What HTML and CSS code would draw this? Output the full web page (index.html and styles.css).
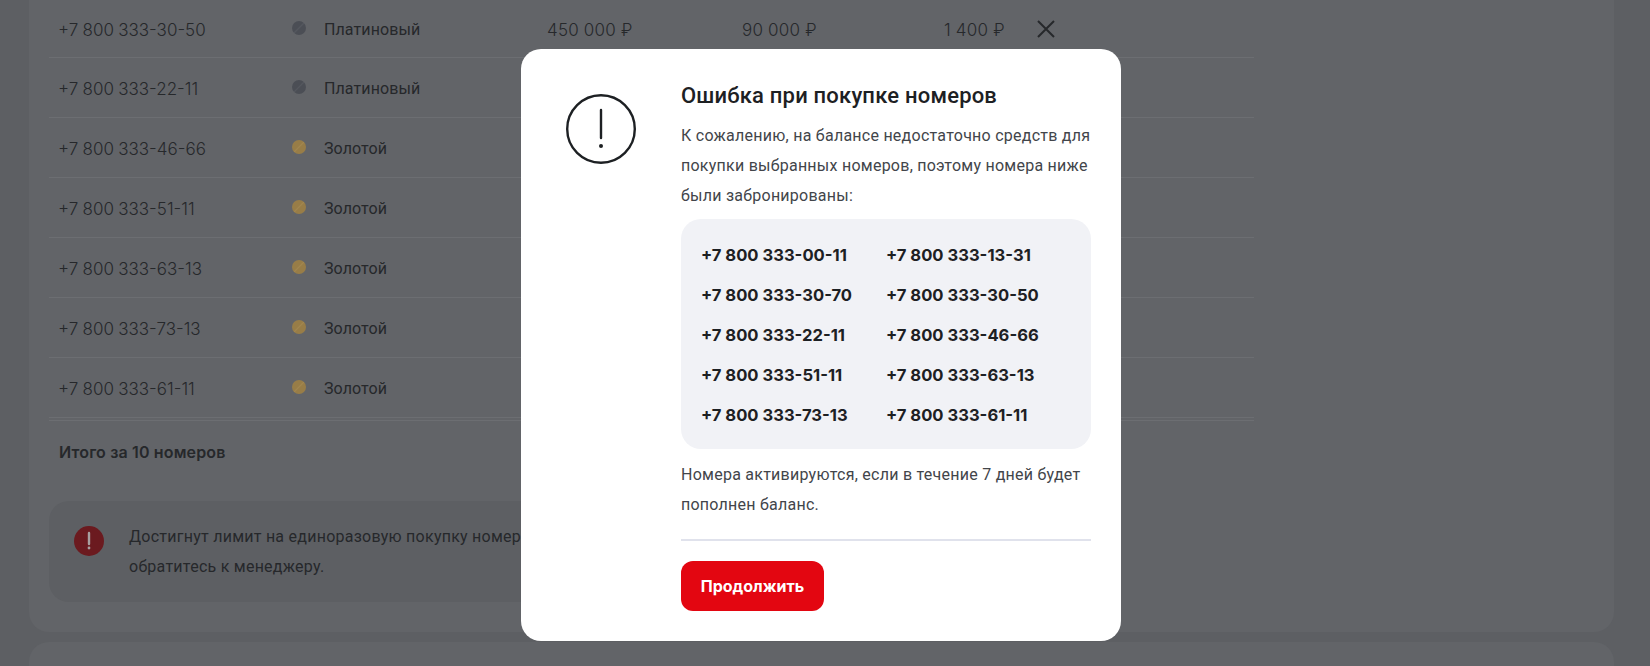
FILE: index.html
```html
<!DOCTYPE html>
<html lang="ru">
<head>
<meta charset="UTF-8">
<meta name="viewport" content="width=device-width, initial-scale=1.0">
<title>Покупка номеров</title>
<link rel="stylesheet" href="styles.css">
</head>
<body>
<div class="page">
    <div class="card">
        <div class="row">
            <div class="phone">+7 800 333-30-50</div>
            <div class="status"><span class="dot platinum"></span>Платиновый</div>
            <div class="price">450 000 ₽</div>
            <div class="price second">90 000 ₽</div>
            <div class="price third">1 400 ₽</div>
            <svg class="remove" width="20" height="18" viewBox="0 0 20 18"><path d="M2 1 L18 17 M18 1 L2 17" fill="none" stroke="#26282b" stroke-width="2"/></svg>
        </div>
        <div class="row">
            <div class="phone">+7 800 333-22-11</div>
            <div class="status"><span class="dot platinum"></span>Платиновый</div>
        </div>
        <div class="row">
            <div class="phone">+7 800 333-46-66</div>
            <div class="status"><span class="dot gold"></span>Золотой</div>
        </div>
        <div class="row">
            <div class="phone">+7 800 333-51-11</div>
            <div class="status"><span class="dot gold"></span>Золотой</div>
        </div>
        <div class="row">
            <div class="phone">+7 800 333-63-13</div>
            <div class="status"><span class="dot gold"></span>Золотой</div>
        </div>
        <div class="row">
            <div class="phone">+7 800 333-73-13</div>
            <div class="status"><span class="dot gold"></span>Золотой</div>
        </div>
        <div class="row last">
            <div class="phone">+7 800 333-61-11</div>
            <div class="status"><span class="dot gold"></span>Золотой</div>
        </div>
        <div class="total">Итого за 10 номеров</div>
        <div class="alert">
            <svg class="alert-icon" width="30" height="30" viewBox="0 0 30 30"><circle cx="15" cy="15" r="15" fill="#6b1a1f"/><path d="M15 7 V18" stroke="#a8a0a0" stroke-width="2.4" stroke-linecap="round"/><circle cx="15" cy="22" r="1.4" fill="#a8a0a0"/></svg>
            <p>Достигнут лимит на единоразовую покупку номеров. Для увеличения лимита<br>обратитесь к менеджеру.</p>
        </div>
    </div>
    <div class="card next"></div>
</div>

<div class="modal">
    <svg class="modal-icon" width="70" height="70" viewBox="0 0 70 70">
        <circle cx="35" cy="35" r="33.8" fill="none" stroke="#1d2023" stroke-width="2.4"/>
        <path d="M35 16 V44" stroke="#1d2023" stroke-width="2.4" stroke-linecap="round"/>
        <circle cx="35" cy="52" r="2" fill="#1d2023"/>
    </svg>
    <div class="modal-body">
        <h2>Ошибка при покупке номеров</h2>
        <p>К сожалению, на балансе недостаточно средств для покупки выбранных номеров, поэтому номера ниже были забронированы:</p>
        <div class="numbers">
            <div>+7 800 333-00-11</div>
            <div>+7 800 333-13-31</div>
            <div>+7 800 333-30-70</div>
            <div>+7 800 333-30-50</div>
            <div>+7 800 333-22-11</div>
            <div>+7 800 333-46-66</div>
            <div>+7 800 333-51-11</div>
            <div>+7 800 333-63-13</div>
            <div>+7 800 333-73-13</div>
            <div>+7 800 333-61-11</div>
        </div>
        <p>Номера активируются, если в течение 7 дней будет пополнен баланс.</p>
        <div class="divider"></div>
        <button class="continue">Продолжить</button>
    </div>
</div>
</body>
</html>
```
FILE: styles.css
```css
html, body {
    margin: 0;
    height: 100%;
    overflow: hidden;
}

body {
    background: #5d5f63;
    font-family: "Roboto", "Liberation Sans", sans-serif;
    color: #1d2023;
}

.page {
    padding: 0 36px 0 29px;
}

.card {
    background: #626468;
    border-radius: 0 0 20px 20px;
    padding: 0 360px 30px 20px;
}

.card.next {
    border-radius: 20px 20px 0 0;
    margin-top: 10px;
    height: 25px;
    padding: 0;
}

.row {
    display: flex;
    align-items: center;
    height: 59px;
    border-bottom: 1px solid #6c6e72;
}

.row:first-child {
    height: 57px;
}

.row.last {
    margin-bottom: 2px;
}

.phone {
    width: 243px;
    padding: 2px 0 0 9px;
    box-sizing: border-box;
    font-family: "Inter", sans-serif;
    font-weight: 300;
    font-size: 17px;
    word-spacing: -.5px;
    color: #26282b;
}

.status {
    display: flex;
    align-items: center;
    width: 255px;
    padding-top: 2px;
    box-sizing: border-box;
    font-size: 16px;
    letter-spacing: .1px;
    color: #26282b;
}

.dot {
    width: 14px;
    height: 14px;
    margin: 0 18px 4px 0;
    border-radius: 50%;
}

.dot.platinum {
    background: linear-gradient(135deg, #4b4e55 44%, #54575e 50%, #4b4e55 56%);
}

.dot.gold {
    background: linear-gradient(135deg, #987d47 44%, #a1864f 50%, #987d47 56%);
}

.price {
    width: 195px;
    padding-top: 2px;
    font-family: "Inter", sans-serif;
    font-weight: 300;
    font-size: 17px;
    letter-spacing: .2px;
    color: #26282b;
}

.price.second {
    width: 202px;
}

.price.third {
    width: 92px;
}

.total {
    border-top: 1px solid #6c6e72;
    padding: 21px 0 0 10px;
    height: 59px;
    font-family: "Inter", sans-serif;
    font-weight: 600;
    font-size: 16px;
    letter-spacing: .15px;
    color: #26282b;
}

.alert {
    display: flex;
    gap: 25px;
    width: 900px;
    box-sizing: border-box;
    padding: 20px 25px;
    border-radius: 20px;
    background: #5d5f63;
}

.alert-icon {
    margin-top: 5px;
    flex: none;
}

.alert p {
    margin: 1px 0 0;
    font-size: 16px;
    line-height: 30px;
    letter-spacing: .25px;
    color: #26282b;
}

.modal {
    position: absolute;
    top: 49px;
    left: 521px;
    box-sizing: border-box;
    width: 600px;
    height: 592px;
    display: flex;
    gap: 45px;
    padding: 29px 30px 30px 45px;
    background: #fff;
    border-radius: 20px;
}

.modal-icon {
    flex: none;
    margin-top: 16px;
}

.modal-body {
    width: 410px;
}

.modal-body h2 {
    margin: 0 0 7px;
    font-size: 22px;
    line-height: 36px;
    font-weight: 500;
    letter-spacing: .2px;
    color: #1d2023;
}

.modal-body p {
    margin: 0;
    font-size: 16px;
    line-height: 30px;
    letter-spacing: .25px;
    color: #42454a;
}

.numbers {
    display: grid;
    grid-template-columns: 176px 1fr;
    grid-auto-rows: 40px;
    align-items: center;
    margin: 8px 0 11px;
    padding: 16px 20px 14px;
    background: #f1f2f6;
    border-radius: 20px;
    font-family: "Inter", sans-serif;
    font-weight: 700;
    font-size: 16.6px;
    color: #1d2023;
}

.numbers div:nth-child(even) {
    padding-left: 9px;
}

.divider {
    height: 2px;
    margin-top: 19px;
    background: #e0e2ec;
}

.continue {
    display: block;
    margin-top: 20px;
    width: 143px;
    height: 50px;
    border: 0;
    border-radius: 12px;
    background: #e30611;
    color: #fff;
    font-family: "Inter", sans-serif;
    font-weight: 700;
    font-size: 16px;
}
```
